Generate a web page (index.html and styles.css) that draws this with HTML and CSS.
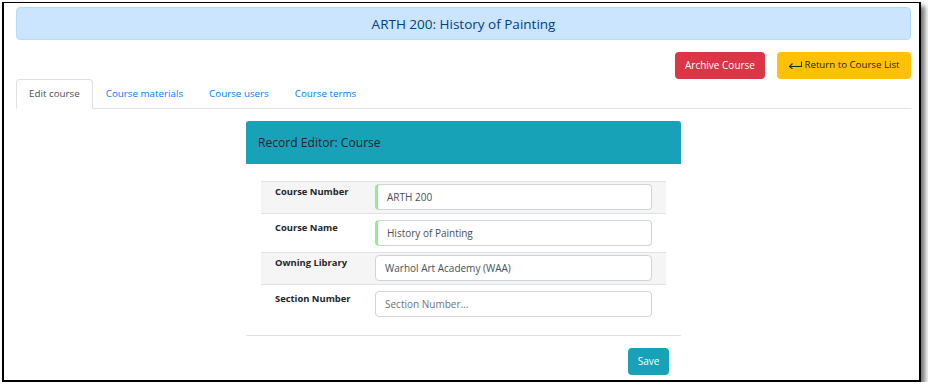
FILE: index.html
```html
<!DOCTYPE html>
<html lang="en">
<head>
<meta charset="utf-8">
<title>ARTH 200: History of Painting</title>
<link rel="stylesheet" href="styles.css">
</head>
<body>
<div class="frame">
  <div class="alert">ARTH 200: History of Painting</div>
  <div class="actions">
    <button class="btn btn-danger">Archive Course</button>
    <button class="btn btn-warning"><svg class="ret-icon" width="15" height="8" viewBox="0 0 15 8"><path d="M13.5 0.5 V5.5 H1.5 M4.5 2.5 L1.5 5.5 L4.5 8" fill="none" stroke="#212529" stroke-width="1.1"/></svg>Return to Course List</button>
  </div>
  <ul class="tabs">
    <li class="tab active">Edit course</li>
    <li class="tab">Course materials</li>
    <li class="tab">Course users</li>
    <li class="tab">Course terms</li>
  </ul>
  <div class="card">
    <div class="card-header">Record Editor: Course</div>
    <div class="card-body">
      <table class="editor">
        <tr>
          <th>Course Number</th>
          <td><div class="input required">ARTH 200</div></td>
        </tr>
        <tr>
          <th>Course Name</th>
          <td><div class="input required">History of Painting</div></td>
        </tr>
        <tr>
          <th>Owning Library</th>
          <td><div class="input">Warhol Art Academy (WAA)</div></td>
        </tr>
        <tr>
          <th>Section Number</th>
          <td><div class="input placeholder">Section Number...</div></td>
        </tr>
      </table>
    </div>
    <div class="card-footer"><button class="btn btn-info">Save</button></div>
  </div>
</div>
</body>
</html>
```
FILE: styles.css
```css
* { box-sizing: border-box; }
html, body { margin: 0; padding: 0; background: #fff; }
body { font-family: "Open Sans", "Noto Sans", sans-serif; color: #212529; }

.frame {
  margin: 2px 0 0 2px;
  width: 919px;
  height: 380px;
  border: 2px solid #000;
  border-top-width: 1px;
  padding: 4px 8px 0 12px;
  box-shadow: 4px 4px 5px rgba(0,0,0,0.55);
  overflow: hidden;
  background: #fff;
}

.alert {
  height: 33px;
  background: #cce5ff;
  border: 1px solid #b8daff;
  border-radius: 4px;
  color: #004085;
  font-size: 13.5px;
  display: flex;
  align-items: center;
  justify-content: center;
}

.actions {
  margin-top: 12px;
  display: flex;
  justify-content: flex-end;
  gap: 12px;
}

.btn {
  height: 27px;
  border: none;
  border-radius: 4px;
  font-family: inherit;
  font-size: 10px;
  padding: 0 0 2px;
  display: flex;
  align-items: center;
  white-space: nowrap;
  cursor: pointer;
}
.btn-danger { background: #dc3545; color: #fff; width: 90px; justify-content: center; }
.btn-warning { background: #ffc107; color: #212529; width: 134px; justify-content: center; font-size: 9.7px; }
.btn-info { background: #17a2b8; color: #fff; width: 41px; justify-content: center; }
.ret-icon { margin-right: 1px; margin-top: 1px; flex: none; }

.tabs {
  list-style: none;
  margin: 0;
  padding: 0;
  display: flex;
  height: 30px;
  border-bottom: 1px solid #dee2e6;
}
.tab {
  padding: 0 12px 2px;
  font-size: 9.8px;
  color: #007bff;
  display: flex;
  align-items: center;
  border: 1px solid transparent;
  border-top-left-radius: 4px;
  border-top-right-radius: 4px;
  margin-bottom: -1px;
}
.tab.active {
  color: #495057;
  background: #fff;
  border-color: #dee2e6 #dee2e6 #fff;
}

.card {
  width: 435px;
  margin: 12px auto 0;
}
.card-header {
  height: 43px;
  background: #17a2b8;
  border-radius: 3px 3px 0 0;
  padding-left: 12px;
  font-size: 12.1px;
  color: #212529;
  display: flex;
  align-items: center;
}
.card-body {
  padding: 17px 15px 12px;
}
.editor {
  width: 405px;
  border-collapse: collapse;
}
.editor tr { border-top: 1px solid #dee2e6; }
.editor tr:nth-child(odd) { background: #f5f5f5; }
.editor th {
  width: 114px;
  text-align: left;
  vertical-align: top;
  font-size: 9.4px;
  font-weight: 700;
  color: #212529;
  padding: 3px 0 0 14px;
  line-height: 14px;
}
.editor tr:nth-child(even) th { padding-top: 7px; }
.editor td {
  padding: 2px 14px 3px 0;
}
.editor tr:nth-child(even) td { padding: 6px 14px 6px 0; }

.input {
  height: 26px;
  border: 1px solid #ced4da;
  border-radius: 4px;
  background: #fff;
  font-size: 10px;
  color: #495057;
  padding-left: 9px;
  display: flex;
  align-items: center;
}
.input.required {
  border-left: 3px solid #90ee90;
  padding-left: 9px;
}
.input.placeholder { color: #6c757d; }

.card-footer {
  border-top: 1px solid #dee2e6;
  padding: 12px 12px 0;
  display: flex;
  justify-content: flex-end;
}
```
